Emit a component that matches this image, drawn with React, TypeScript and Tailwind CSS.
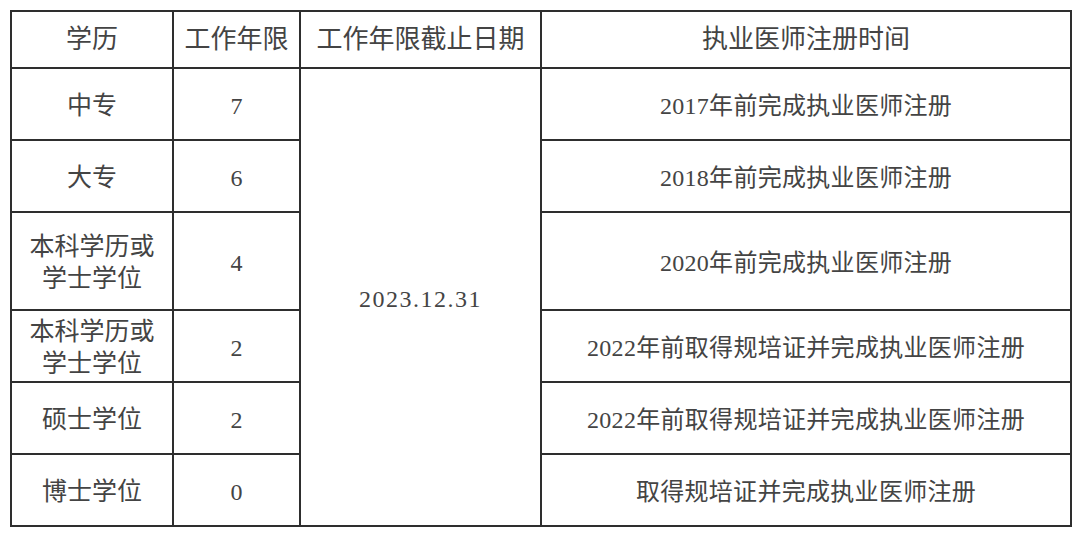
import React from 'react';

type Row = {
  edu: string[];
  years: string;
  reg: string;
  h: string;
};

const ROWS: Row[] = [
  { edu: ['中专'], years: '7', reg: '2017年前完成执业医师注册', h: 'h-[72px]' },
  { edu: ['大专'], years: '6', reg: '2018年前完成执业医师注册', h: 'h-[72px]' },
  { edu: ['本科学历或', '学士学位'], years: '4', reg: '2020年前完成执业医师注册', h: 'h-[98px]' },
  { edu: ['本科学历或', '学士学位'], years: '2', reg: '2022年前取得规培证并完成执业医师注册', h: 'h-[72px]' },
  { edu: ['硕士学位'], years: '2', reg: '2022年前取得规培证并完成执业医师注册', h: 'h-[72px]' },
  { edu: ['博士学位'], years: '0', reg: '取得规培证并完成执业医师注册', h: 'h-[72px]' },
];

const cell = 'border-2 border-[#2e2e2e] text-center align-middle p-0';

const App: React.FC = () => {
  return (
    <div
      className="w-[1080px] h-[535px] bg-white pt-[10px] pl-[10px] text-[#444]"
      style={{ fontFamily: '"Liberation Serif", "Noto Sans CJK SC", serif' }}
    >
      <table className="table-fixed border-collapse w-[1060px]">
        <colgroup>
          <col className="w-[162px]" />
          <col className="w-[127px]" />
          <col className="w-[241px]" />
          <col className="w-[530px]" />
        </colgroup>
        <thead>
          <tr className="h-[57px] text-[26px]">
            <th className={`${cell} font-normal`}>学历</th>
            <th className={`${cell} font-normal whitespace-nowrap`}>工作年限</th>
            <th className={`${cell} font-normal whitespace-nowrap`}>工作年限截止日期</th>
            <th className={`${cell} font-normal`}>执业医师注册时间</th>
          </tr>
        </thead>
        <tbody className="text-[24px]">
          {ROWS.map((row, i) => (
            <tr key={i} className={row.h}>
              <td className={`${cell} text-[25px] leading-[32px] pt-1`}>
                {row.edu.map(line => (
                  <div key={line}>{line}</div>
                ))}
              </td>
              <td className={`${cell} pt-1`}>{row.years}</td>
              {i === 0 && (
                <td rowSpan={6} className={`${cell} tracking-[1.5px] pt-1`}>
                  2023.12.31
                </td>
              )}
              <td className={`${cell} whitespace-nowrap tracking-[0.3px] pt-1`}>{row.reg}</td>
            </tr>
          ))}
        </tbody>
      </table>
    </div>
  );
};

export default App;
